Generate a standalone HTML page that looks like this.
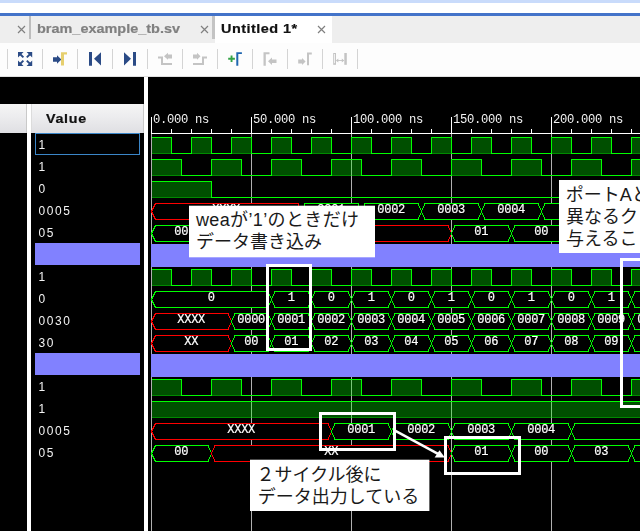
<!DOCTYPE html>
<html lang="ja"><head><meta charset="utf-8"><title>Untitled 1* - waveform</title>
<style>
html,body{margin:0;padding:0;}
body{width:640px;height:531px;background:#000;overflow:hidden;position:relative;font-family:"Liberation Sans",sans-serif;}
.abs{position:absolute;}
#top0{left:0;top:0;width:640px;height:3px;background:#c9dbfb;}
#top1{left:0;top:3px;width:640px;height:10px;background:#ffffff;}
#top2{left:0;top:13px;width:640px;height:3px;background:#4373c9;}
#tabs{left:0;top:16px;width:640px;height:27px;background:#eeeeee;}
#tabact{left:215px;top:0;width:117px;height:27px;background:#ffffff;}
.tabsep{top:0;width:2px;height:23px;background:#bdbdbd;}
.tab{top:5px;font-size:13px;font-weight:bold;letter-spacing:0;white-space:nowrap;line-height:16px;transform:scaleX(1.112);transform-origin:0 0;-webkit-text-stroke:0.2px currentColor;}
.x{top:9px;width:9px;height:9px;}
#tool{left:0;top:43px;width:640px;height:33px;background:#fdfdfd;border-bottom:1px solid #e0e0e0;}
#main{left:0;top:77px;width:640px;height:454px;background:#000;}
.hdr{top:104px;height:29px;background:linear-gradient(#f5f5f5,#ececee 45%,#dfdfe3);box-sizing:border-box;}
.wbar{background:#ffffff;}
.val{position:absolute;left:38.5px;width:100px;height:22px;line-height:24px;color:#f4f4f4;font-size:13px;letter-spacing:0.7px;}
.band{position:absolute;left:35px;width:105px;height:22px;background:#8181ff;}
#sel{left:35px;top:133px;width:103px;height:20px;border:1px solid #3b86c8;}
.hid{position:absolute;color:transparent;font-size:18px;line-height:22px;white-space:nowrap;overflow:hidden;}
svg{position:absolute;left:0;top:0;}
.tab,.val,.hv,.gt{filter:grayscale(1);}
</style></head>
<body>
<div id="top0" class="abs"></div><div id="top1" class="abs"></div><div id="top2" class="abs"></div>
<div id="tabs" class="abs">
  <svg class="x abs" style="left:17px" viewBox="0 0 9 9" width="9" height="9"><path d="M1,1 L8,8 M8,1 L1,8" stroke="#808080" stroke-width="1.2" fill="none"/></svg>
  <div class="tabsep abs" style="left:29px"></div>
  <svg class="x abs" style="left:200px" viewBox="0 0 9 9" width="9" height="9"><path d="M1,1 L8,8 M8,1 L1,8" stroke="#808080" stroke-width="1.2" fill="none"/></svg>
  <div class="tabsep abs" style="left:212px;width:3px;background:#c4c4c4"></div>
  <div id="tabact" class="abs"></div>
  <svg class="x abs" style="left:317px" viewBox="0 0 9 9" width="9" height="9"><path d="M1,1 L8,8 M8,1 L1,8" stroke="#808080" stroke-width="1.2" fill="none"/></svg>
</div>
<div id="tool" class="abs"></div>
<div id="main" class="abs"></div>
<div class="hdr abs" style="left:0;width:27px;border-right:1px solid #c9c9c9"></div>
<div class="hdr abs" style="left:31px;width:113px;border-left:1px solid #dcdcdc;border-right:1px solid #c9c9c9"></div>
<div class="wbar abs" style="left:27px;top:104px;width:4px;height:427px"></div>
<div class="wbar abs" style="left:144px;top:77px;width:4px;height:454px"></div>
<div class="band" style="top:243px"></div>
<div class="band" style="top:353px"></div>
<div id="sel" class="abs"></div>
<svg width="640" height="531" viewBox="0 0 640 531">
<rect x="7" y="49" width="1" height="20" fill="#d4d4d4"/>
<rect x="42" y="49" width="1" height="20" fill="#d4d4d4"/>
<rect x="77" y="49" width="1" height="20" fill="#d4d4d4"/>
<rect x="112" y="49" width="1" height="20" fill="#d4d4d4"/>
<rect x="147" y="49" width="1" height="20" fill="#d4d4d4"/>
<rect x="182" y="49" width="1" height="20" fill="#d4d4d4"/>
<rect x="217" y="49" width="1" height="20" fill="#d4d4d4"/>
<rect x="252" y="49" width="1" height="20" fill="#d4d4d4"/>
<rect x="287" y="49" width="1" height="20" fill="#d4d4d4"/>
<rect x="322" y="49" width="1" height="20" fill="#d4d4d4"/>
<rect x="357" y="49" width="1" height="20" fill="#d4d4d4"/>
<g fill="none" stroke="#2b4b86" stroke-width="1.9" stroke-linecap="butt">
<path d="M23.4,57.4 L19.5,53.5 M26.8,57.4 L30.7,53.5 M23.4,60.6 L19.5,64.5 M26.8,60.6 L30.7,64.5"/></g>
<g fill="#2b4b86">
<path d="M18,52 h5.6 l-5.6,5.6 z M32.2,52 v5.6 l-5.6,-5.6 z M18,66 v-5.6 l5.6,5.6 z M32.2,66 h-5.6 l5.6,-5.6 z"/></g>
<path d="M53,57.2 h4 v-2 l4.4,4.3 l-4.4,4.3 v-2 h-4 z" fill="#2b4b86"/>
<path d="M61,52.2 h6 v2.3 h-3 v11 h-3 z" fill="#e6cf6e"/>
<path d="M89,52 h3 v13.8 h-3 z M101,52.2 v13.3 l-7,-6.65 z" fill="#2b4b86"/>
<path d="M133,52 h3 v13.8 h-3 z M124,52.2 v13.3 l7,-6.65 z" fill="#2b4b86"/>
<path d="M158,56.5 h5 v6.5 h9 v2 h-11 v-6.5 h-3 z" fill="#c4c4c4"/>
<path d="M164,56.3 l4,-3.5 v1.7 h4 v4 h-4 v1.3 z" fill="#c4c4c4"/>
<path d="M207,56.5 h-5 v6.5 h-9 v2 h11 v-6.5 h3 z" fill="#c4c4c4"/>
<path d="M200.5,56.3 l-3.5,-3.5 v1.7 h-4 v4 h4 v1.3 z" fill="#c4c4c4"/>
<path d="M230.6,55.4 h1.9 v2.4 h2.4 v1.9 h-2.4 v2.4 h-1.9 v-2.4 h-2.4 v-1.9 h2.4 z" fill="#35a447"/>
<path d="M236.3,52.3 h5.6 v1.8 h-3.6 v11.6 h-2 z" fill="#1f66b0"/>
<path d="M263.5,52.2 h6 v2 h-3.7 v11.6 h-2.3 z" fill="#c4c4c4"/>
<path d="M268,61.2 l4,-3.7 v2 h4.5 v3.5 h-4.5 v2 z" fill="#c4c4c4"/>
<path d="M307,52.5 h4.8 v2 h-2.8 v10.7 h-2 z" fill="#c4c4c4"/>
<path d="M305.6,61.5 l-3.6,-3.5 v1.5 h-3.8 v4 h3.8 v1.5 z" fill="#c4c4c4"/>
<rect x="333.7" y="53.5" width="1.8" height="10.8" fill="none" stroke="#c4c4c4" stroke-width="1"/>
<rect x="344.3" y="53" width="2.5" height="11.8" fill="#c4c4c4"/>
<path d="M337,60.5 h6.5" stroke="#c4c4c4" stroke-width="0.9" fill="none"/>
<path d="M335.9,60.5 l2.4,-1.9 v3.8 z M344.2,60.5 l-2.4,-1.9 v3.8 z" fill="#c4c4c4"/>
<g class="gt" font-family="Liberation Sans, sans-serif" font-size="13" font-weight="bold" stroke-width="0.2">
<text transform="translate(37,33) scale(1.112,1)" textLength="128.63" lengthAdjust="spacing" fill="#808080" stroke="#808080">bram_example_tb.sv</text>
<text transform="translate(221,33) scale(1.112,1)" textLength="68.48" lengthAdjust="spacing" fill="#111111" stroke="#111111" xml:space="preserve">Untitled 1*</text>
<text transform="translate(46,123) scale(1.1,1)" textLength="36.46" lengthAdjust="spacing" fill="#111111" stroke="#111111">Value</text>
</g>
<g class="gt" font-family="Liberation Sans, sans-serif" font-size="13" fill="#f4f4f4"><text transform="translate(38.5,149) scale(0.92,1)" textLength="7.23" lengthAdjust="spacing">1</text>
<text transform="translate(38.5,171) scale(0.92,1)" textLength="7.23" lengthAdjust="spacing">1</text>
<text transform="translate(38.5,193) scale(0.92,1)" textLength="7.23" lengthAdjust="spacing">0</text>
<text transform="translate(38.5,215) scale(0.92,1)" textLength="34.23" lengthAdjust="spacing">0005</text>
<text transform="translate(38.5,237) scale(0.92,1)" textLength="16.23" lengthAdjust="spacing">05</text>
<text transform="translate(38.5,281) scale(0.92,1)" textLength="7.23" lengthAdjust="spacing">1</text>
<text transform="translate(38.5,303) scale(0.92,1)" textLength="7.23" lengthAdjust="spacing">0</text>
<text transform="translate(38.5,325) scale(0.92,1)" textLength="34.23" lengthAdjust="spacing">0030</text>
<text transform="translate(38.5,347) scale(0.92,1)" textLength="16.23" lengthAdjust="spacing">30</text>
<text transform="translate(38.5,391) scale(0.92,1)" textLength="7.23" lengthAdjust="spacing">1</text>
<text transform="translate(38.5,413) scale(0.92,1)" textLength="7.23" lengthAdjust="spacing">1</text>
<text transform="translate(38.5,435) scale(0.92,1)" textLength="34.23" lengthAdjust="spacing">0005</text>
<text transform="translate(38.5,457) scale(0.92,1)" textLength="16.23" lengthAdjust="spacing">05</text></g>
<g shape-rendering="crispEdges">
<rect x="151" y="134" width="1" height="398" fill="#b0b0b0"/>
<rect x="251" y="134" width="1" height="398" fill="#b0b0b0"/>
<rect x="351" y="134" width="1" height="398" fill="#b0b0b0"/>
<rect x="451" y="134" width="1" height="398" fill="#b0b0b0"/>
<rect x="551" y="134" width="1" height="398" fill="#b0b0b0"/>
<rect x="152" y="138" width="19" height="15" fill="#00ff00" fill-opacity="0.31"/>
<rect x="152" y="153" width="19" height="1" fill="#00ff00" fill-opacity="0.54"/>
<rect x="192" y="138" width="19" height="15" fill="#00ff00" fill-opacity="0.31"/>
<rect x="192" y="153" width="19" height="1" fill="#00ff00" fill-opacity="0.54"/>
<rect x="232" y="138" width="19" height="15" fill="#00ff00" fill-opacity="0.31"/>
<rect x="232" y="153" width="19" height="1" fill="#00ff00" fill-opacity="0.54"/>
<rect x="272" y="138" width="19" height="15" fill="#00ff00" fill-opacity="0.31"/>
<rect x="272" y="153" width="19" height="1" fill="#00ff00" fill-opacity="0.54"/>
<rect x="312" y="138" width="19" height="15" fill="#00ff00" fill-opacity="0.31"/>
<rect x="312" y="153" width="19" height="1" fill="#00ff00" fill-opacity="0.54"/>
<rect x="352" y="138" width="19" height="15" fill="#00ff00" fill-opacity="0.31"/>
<rect x="352" y="153" width="19" height="1" fill="#00ff00" fill-opacity="0.54"/>
<rect x="392" y="138" width="19" height="15" fill="#00ff00" fill-opacity="0.31"/>
<rect x="392" y="153" width="19" height="1" fill="#00ff00" fill-opacity="0.54"/>
<rect x="432" y="138" width="19" height="15" fill="#00ff00" fill-opacity="0.31"/>
<rect x="432" y="153" width="19" height="1" fill="#00ff00" fill-opacity="0.54"/>
<rect x="472" y="138" width="19" height="15" fill="#00ff00" fill-opacity="0.31"/>
<rect x="472" y="153" width="19" height="1" fill="#00ff00" fill-opacity="0.54"/>
<rect x="512" y="138" width="19" height="15" fill="#00ff00" fill-opacity="0.31"/>
<rect x="512" y="153" width="19" height="1" fill="#00ff00" fill-opacity="0.54"/>
<rect x="552" y="138" width="19" height="15" fill="#00ff00" fill-opacity="0.31"/>
<rect x="552" y="153" width="19" height="1" fill="#00ff00" fill-opacity="0.54"/>
<rect x="592" y="138" width="19" height="15" fill="#00ff00" fill-opacity="0.31"/>
<rect x="592" y="153" width="19" height="1" fill="#00ff00" fill-opacity="0.54"/>
<rect x="632" y="138" width="10" height="15" fill="#00ff00" fill-opacity="0.31"/>
<rect x="632" y="153" width="10" height="1" fill="#00ff00" fill-opacity="0.54"/>
<polyline points="151.5,137.5 171.5,137.5 171.5,153.5 191.5,153.5 191.5,137.5 211.5,137.5 211.5,153.5 231.5,153.5 231.5,137.5 251.5,137.5 251.5,153.5 271.5,153.5 271.5,137.5 291.5,137.5 291.5,153.5 311.5,153.5 311.5,137.5 331.5,137.5 331.5,153.5 351.5,153.5 351.5,137.5 371.5,137.5 371.5,153.5 391.5,153.5 391.5,137.5 411.5,137.5 411.5,153.5 431.5,153.5 431.5,137.5 451.5,137.5 451.5,153.5 471.5,153.5 471.5,137.5 491.5,137.5 491.5,153.5 511.5,153.5 511.5,137.5 531.5,137.5 531.5,153.5 551.5,153.5 551.5,137.5 571.5,137.5 571.5,153.5 591.5,153.5 591.5,137.5 611.5,137.5 611.5,153.5 631.5,153.5 631.5,137.5 642.5,137.5" fill="none" stroke="#00ff00" stroke-width="1"/>
<rect x="152" y="160" width="29" height="15" fill="#00ff00" fill-opacity="0.31"/>
<rect x="152" y="175" width="29" height="1" fill="#00ff00" fill-opacity="0.54"/>
<rect x="212" y="160" width="29" height="15" fill="#00ff00" fill-opacity="0.31"/>
<rect x="212" y="175" width="29" height="1" fill="#00ff00" fill-opacity="0.54"/>
<rect x="272" y="160" width="29" height="15" fill="#00ff00" fill-opacity="0.31"/>
<rect x="272" y="175" width="29" height="1" fill="#00ff00" fill-opacity="0.54"/>
<rect x="332" y="160" width="29" height="15" fill="#00ff00" fill-opacity="0.31"/>
<rect x="332" y="175" width="29" height="1" fill="#00ff00" fill-opacity="0.54"/>
<rect x="392" y="160" width="29" height="15" fill="#00ff00" fill-opacity="0.31"/>
<rect x="392" y="175" width="29" height="1" fill="#00ff00" fill-opacity="0.54"/>
<rect x="452" y="160" width="29" height="15" fill="#00ff00" fill-opacity="0.31"/>
<rect x="452" y="175" width="29" height="1" fill="#00ff00" fill-opacity="0.54"/>
<rect x="512" y="160" width="29" height="15" fill="#00ff00" fill-opacity="0.31"/>
<rect x="512" y="175" width="29" height="1" fill="#00ff00" fill-opacity="0.54"/>
<rect x="572" y="160" width="29" height="15" fill="#00ff00" fill-opacity="0.31"/>
<rect x="572" y="175" width="29" height="1" fill="#00ff00" fill-opacity="0.54"/>
<rect x="632" y="160" width="10" height="15" fill="#00ff00" fill-opacity="0.31"/>
<rect x="632" y="175" width="10" height="1" fill="#00ff00" fill-opacity="0.54"/>
<polyline points="151.5,159.5 181.5,159.5 181.5,175.5 211.5,175.5 211.5,159.5 241.5,159.5 241.5,175.5 271.5,175.5 271.5,159.5 301.5,159.5 301.5,175.5 331.5,175.5 331.5,159.5 361.5,159.5 361.5,175.5 391.5,175.5 391.5,159.5 421.5,159.5 421.5,175.5 451.5,175.5 451.5,159.5 481.5,159.5 481.5,175.5 511.5,175.5 511.5,159.5 541.5,159.5 541.5,175.5 571.5,175.5 571.5,159.5 601.5,159.5 601.5,175.5 631.5,175.5 631.5,159.5 642.5,159.5" fill="none" stroke="#00ff00" stroke-width="1"/>
<rect x="152" y="182" width="59" height="15" fill="#00ff00" fill-opacity="0.31"/>
<rect x="152" y="197" width="59" height="1" fill="#00ff00" fill-opacity="0.54"/>
<polyline points="151.5,181.5 211.5,181.5 211.5,197.5 642.5,197.5" fill="none" stroke="#00ff00" stroke-width="1"/>
<rect x="152" y="270" width="19" height="15" fill="#00ff00" fill-opacity="0.31"/>
<rect x="152" y="285" width="19" height="1" fill="#00ff00" fill-opacity="0.54"/>
<rect x="192" y="270" width="19" height="15" fill="#00ff00" fill-opacity="0.31"/>
<rect x="192" y="285" width="19" height="1" fill="#00ff00" fill-opacity="0.54"/>
<rect x="232" y="270" width="19" height="15" fill="#00ff00" fill-opacity="0.31"/>
<rect x="232" y="285" width="19" height="1" fill="#00ff00" fill-opacity="0.54"/>
<rect x="272" y="270" width="19" height="15" fill="#00ff00" fill-opacity="0.31"/>
<rect x="272" y="285" width="19" height="1" fill="#00ff00" fill-opacity="0.54"/>
<rect x="312" y="270" width="19" height="15" fill="#00ff00" fill-opacity="0.31"/>
<rect x="312" y="285" width="19" height="1" fill="#00ff00" fill-opacity="0.54"/>
<rect x="352" y="270" width="19" height="15" fill="#00ff00" fill-opacity="0.31"/>
<rect x="352" y="285" width="19" height="1" fill="#00ff00" fill-opacity="0.54"/>
<rect x="392" y="270" width="19" height="15" fill="#00ff00" fill-opacity="0.31"/>
<rect x="392" y="285" width="19" height="1" fill="#00ff00" fill-opacity="0.54"/>
<rect x="432" y="270" width="19" height="15" fill="#00ff00" fill-opacity="0.31"/>
<rect x="432" y="285" width="19" height="1" fill="#00ff00" fill-opacity="0.54"/>
<rect x="472" y="270" width="19" height="15" fill="#00ff00" fill-opacity="0.31"/>
<rect x="472" y="285" width="19" height="1" fill="#00ff00" fill-opacity="0.54"/>
<rect x="512" y="270" width="19" height="15" fill="#00ff00" fill-opacity="0.31"/>
<rect x="512" y="285" width="19" height="1" fill="#00ff00" fill-opacity="0.54"/>
<rect x="552" y="270" width="19" height="15" fill="#00ff00" fill-opacity="0.31"/>
<rect x="552" y="285" width="19" height="1" fill="#00ff00" fill-opacity="0.54"/>
<rect x="592" y="270" width="19" height="15" fill="#00ff00" fill-opacity="0.31"/>
<rect x="592" y="285" width="19" height="1" fill="#00ff00" fill-opacity="0.54"/>
<rect x="632" y="270" width="10" height="15" fill="#00ff00" fill-opacity="0.31"/>
<rect x="632" y="285" width="10" height="1" fill="#00ff00" fill-opacity="0.54"/>
<polyline points="151.5,269.5 171.5,269.5 171.5,285.5 191.5,285.5 191.5,269.5 211.5,269.5 211.5,285.5 231.5,285.5 231.5,269.5 251.5,269.5 251.5,285.5 271.5,285.5 271.5,269.5 291.5,269.5 291.5,285.5 311.5,285.5 311.5,269.5 331.5,269.5 331.5,285.5 351.5,285.5 351.5,269.5 371.5,269.5 371.5,285.5 391.5,285.5 391.5,269.5 411.5,269.5 411.5,285.5 431.5,285.5 431.5,269.5 451.5,269.5 451.5,285.5 471.5,285.5 471.5,269.5 491.5,269.5 491.5,285.5 511.5,285.5 511.5,269.5 531.5,269.5 531.5,285.5 551.5,285.5 551.5,269.5 571.5,269.5 571.5,285.5 591.5,285.5 591.5,269.5 611.5,269.5 611.5,285.5 631.5,285.5 631.5,269.5 642.5,269.5" fill="none" stroke="#00ff00" stroke-width="1"/>
<rect x="152" y="380" width="29" height="15" fill="#00ff00" fill-opacity="0.31"/>
<rect x="152" y="395" width="29" height="1" fill="#00ff00" fill-opacity="0.54"/>
<rect x="212" y="380" width="29" height="15" fill="#00ff00" fill-opacity="0.31"/>
<rect x="212" y="395" width="29" height="1" fill="#00ff00" fill-opacity="0.54"/>
<rect x="272" y="380" width="29" height="15" fill="#00ff00" fill-opacity="0.31"/>
<rect x="272" y="395" width="29" height="1" fill="#00ff00" fill-opacity="0.54"/>
<rect x="332" y="380" width="29" height="15" fill="#00ff00" fill-opacity="0.31"/>
<rect x="332" y="395" width="29" height="1" fill="#00ff00" fill-opacity="0.54"/>
<rect x="392" y="380" width="29" height="15" fill="#00ff00" fill-opacity="0.31"/>
<rect x="392" y="395" width="29" height="1" fill="#00ff00" fill-opacity="0.54"/>
<rect x="452" y="380" width="29" height="15" fill="#00ff00" fill-opacity="0.31"/>
<rect x="452" y="395" width="29" height="1" fill="#00ff00" fill-opacity="0.54"/>
<rect x="512" y="380" width="29" height="15" fill="#00ff00" fill-opacity="0.31"/>
<rect x="512" y="395" width="29" height="1" fill="#00ff00" fill-opacity="0.54"/>
<rect x="572" y="380" width="29" height="15" fill="#00ff00" fill-opacity="0.31"/>
<rect x="572" y="395" width="29" height="1" fill="#00ff00" fill-opacity="0.54"/>
<rect x="632" y="380" width="10" height="15" fill="#00ff00" fill-opacity="0.31"/>
<rect x="632" y="395" width="10" height="1" fill="#00ff00" fill-opacity="0.54"/>
<polyline points="151.5,379.5 181.5,379.5 181.5,395.5 211.5,395.5 211.5,379.5 241.5,379.5 241.5,395.5 271.5,395.5 271.5,379.5 301.5,379.5 301.5,395.5 331.5,395.5 331.5,379.5 361.5,379.5 361.5,395.5 391.5,395.5 391.5,379.5 421.5,379.5 421.5,395.5 451.5,395.5 451.5,379.5 481.5,379.5 481.5,395.5 511.5,395.5 511.5,379.5 541.5,379.5 541.5,395.5 571.5,395.5 571.5,379.5 601.5,379.5 601.5,395.5 631.5,395.5 631.5,379.5 642.5,379.5" fill="none" stroke="#00ff00" stroke-width="1"/>
<rect x="152" y="402" width="490" height="15" fill="#00ff00" fill-opacity="0.31"/>
<rect x="152" y="417" width="490" height="1" fill="#00ff00" fill-opacity="0.54"/>
<polyline points="151.5,401.5 642.5,401.5" fill="none" stroke="#00ff00" stroke-width="1"/>
<path d="M151.5,211.5 L155.5,203.5 L298.0,203.5 L301.5,211.5 L298.0,219.5 L155.5,219.5 Z" fill="#000000" stroke="#ff0000" stroke-width="1"/>
<path d="M301.5,211.5 L305.0,203.5 L358.0,203.5 L361.5,211.5 L358.0,219.5 L305.0,219.5 Z" fill="#000000" stroke="#00ff00" stroke-width="1"/>
<path d="M361.5,211.5 L365.0,203.5 L418.0,203.5 L421.5,211.5 L418.0,219.5 L365.0,219.5 Z" fill="#000000" stroke="#00ff00" stroke-width="1"/>
<path d="M421.5,211.5 L425.0,203.5 L478.0,203.5 L481.5,211.5 L478.0,219.5 L425.0,219.5 Z" fill="#000000" stroke="#00ff00" stroke-width="1"/>
<path d="M481.5,211.5 L485.0,203.5 L538.0,203.5 L541.5,211.5 L538.0,219.5 L485.0,219.5 Z" fill="#000000" stroke="#00ff00" stroke-width="1"/>
<path d="M541.5,211.5 L545.0,203.5 L598.0,203.5 L601.5,211.5 L598.0,219.5 L545.0,219.5 Z" fill="#000000" stroke="#00ff00" stroke-width="1"/>
<path d="M601.5,211.5 L605.0,203.5 L680.5,203.5 L680.5,211.5 L680.5,219.5 L605.0,219.5 Z" fill="#000000" stroke="#00ff00" stroke-width="1"/>
<path d="M151.5,233.5 L155.5,225.5 L208.0,225.5 L211.5,233.5 L208.0,241.5 L155.5,241.5 Z" fill="#000000" stroke="#00ff00" stroke-width="1"/>
<path d="M211.5,233.5 L215.0,225.5 L448.0,225.5 L451.5,233.5 L448.0,241.5 L215.0,241.5 Z" fill="#000000" stroke="#ff0000" stroke-width="1"/>
<path d="M451.5,233.5 L455.0,225.5 L508.0,225.5 L511.5,233.5 L508.0,241.5 L455.0,241.5 Z" fill="#000000" stroke="#00ff00" stroke-width="1"/>
<path d="M511.5,233.5 L515.0,225.5 L568.0,225.5 L571.5,233.5 L568.0,241.5 L515.0,241.5 Z" fill="#000000" stroke="#00ff00" stroke-width="1"/>
<path d="M571.5,233.5 L575.0,225.5 L628.0,225.5 L631.5,233.5 L628.0,241.5 L575.0,241.5 Z" fill="#000000" stroke="#00ff00" stroke-width="1"/>
<path d="M631.5,233.5 L635.0,225.5 L680.5,225.5 L680.5,233.5 L680.5,241.5 L635.0,241.5 Z" fill="#000000" stroke="#00ff00" stroke-width="1"/>
<path d="M151.5,299.5 L155.5,291.5 L268.0,291.5 L271.5,299.5 L268.0,307.5 L155.5,307.5 Z" fill="#000000" stroke="#00ff00" stroke-width="1"/>
<path d="M271.5,299.5 L275.0,291.5 L308.0,291.5 L311.5,299.5 L308.0,307.5 L275.0,307.5 Z" fill="#000000" stroke="#00ff00" stroke-width="1"/>
<path d="M311.5,299.5 L315.0,291.5 L348.0,291.5 L351.5,299.5 L348.0,307.5 L315.0,307.5 Z" fill="#000000" stroke="#00ff00" stroke-width="1"/>
<path d="M351.5,299.5 L355.0,291.5 L388.0,291.5 L391.5,299.5 L388.0,307.5 L355.0,307.5 Z" fill="#000000" stroke="#00ff00" stroke-width="1"/>
<path d="M391.5,299.5 L395.0,291.5 L428.0,291.5 L431.5,299.5 L428.0,307.5 L395.0,307.5 Z" fill="#000000" stroke="#00ff00" stroke-width="1"/>
<path d="M431.5,299.5 L435.0,291.5 L468.0,291.5 L471.5,299.5 L468.0,307.5 L435.0,307.5 Z" fill="#000000" stroke="#00ff00" stroke-width="1"/>
<path d="M471.5,299.5 L475.0,291.5 L508.0,291.5 L511.5,299.5 L508.0,307.5 L475.0,307.5 Z" fill="#000000" stroke="#00ff00" stroke-width="1"/>
<path d="M511.5,299.5 L515.0,291.5 L548.0,291.5 L551.5,299.5 L548.0,307.5 L515.0,307.5 Z" fill="#000000" stroke="#00ff00" stroke-width="1"/>
<path d="M551.5,299.5 L555.0,291.5 L588.0,291.5 L591.5,299.5 L588.0,307.5 L555.0,307.5 Z" fill="#000000" stroke="#00ff00" stroke-width="1"/>
<path d="M591.5,299.5 L595.0,291.5 L628.0,291.5 L631.5,299.5 L628.0,307.5 L595.0,307.5 Z" fill="#000000" stroke="#00ff00" stroke-width="1"/>
<path d="M631.5,299.5 L635.0,291.5 L668.0,291.5 L671.5,299.5 L668.0,307.5 L635.0,307.5 Z" fill="#000000" stroke="#00ff00" stroke-width="1"/>
<path d="M671.5,299.5 L675.0,291.5 L680.5,291.5 L680.5,299.5 L680.5,307.5 L675.0,307.5 Z" fill="#000000" stroke="#00ff00" stroke-width="1"/>
<path d="M151.5,321.5 L155.5,313.5 L228.0,313.5 L231.5,321.5 L228.0,329.5 L155.5,329.5 Z" fill="#000000" stroke="#ff0000" stroke-width="1"/>
<path d="M231.5,321.5 L235.0,313.5 L268.0,313.5 L271.5,321.5 L268.0,329.5 L235.0,329.5 Z" fill="#000000" stroke="#00ff00" stroke-width="1"/>
<path d="M271.5,321.5 L275.0,313.5 L308.0,313.5 L311.5,321.5 L308.0,329.5 L275.0,329.5 Z" fill="#000000" stroke="#00ff00" stroke-width="1"/>
<path d="M311.5,321.5 L315.0,313.5 L348.0,313.5 L351.5,321.5 L348.0,329.5 L315.0,329.5 Z" fill="#000000" stroke="#00ff00" stroke-width="1"/>
<path d="M351.5,321.5 L355.0,313.5 L388.0,313.5 L391.5,321.5 L388.0,329.5 L355.0,329.5 Z" fill="#000000" stroke="#00ff00" stroke-width="1"/>
<path d="M391.5,321.5 L395.0,313.5 L428.0,313.5 L431.5,321.5 L428.0,329.5 L395.0,329.5 Z" fill="#000000" stroke="#00ff00" stroke-width="1"/>
<path d="M431.5,321.5 L435.0,313.5 L468.0,313.5 L471.5,321.5 L468.0,329.5 L435.0,329.5 Z" fill="#000000" stroke="#00ff00" stroke-width="1"/>
<path d="M471.5,321.5 L475.0,313.5 L508.0,313.5 L511.5,321.5 L508.0,329.5 L475.0,329.5 Z" fill="#000000" stroke="#00ff00" stroke-width="1"/>
<path d="M511.5,321.5 L515.0,313.5 L548.0,313.5 L551.5,321.5 L548.0,329.5 L515.0,329.5 Z" fill="#000000" stroke="#00ff00" stroke-width="1"/>
<path d="M551.5,321.5 L555.0,313.5 L588.0,313.5 L591.5,321.5 L588.0,329.5 L555.0,329.5 Z" fill="#000000" stroke="#00ff00" stroke-width="1"/>
<path d="M591.5,321.5 L595.0,313.5 L628.0,313.5 L631.5,321.5 L628.0,329.5 L595.0,329.5 Z" fill="#000000" stroke="#00ff00" stroke-width="1"/>
<path d="M631.5,321.5 L635.0,313.5 L668.0,313.5 L671.5,321.5 L668.0,329.5 L635.0,329.5 Z" fill="#000000" stroke="#00ff00" stroke-width="1"/>
<path d="M671.5,321.5 L675.0,313.5 L680.5,313.5 L680.5,321.5 L680.5,329.5 L675.0,329.5 Z" fill="#000000" stroke="#00ff00" stroke-width="1"/>
<path d="M151.5,343.5 L155.5,335.5 L228.0,335.5 L231.5,343.5 L228.0,351.5 L155.5,351.5 Z" fill="#000000" stroke="#ff0000" stroke-width="1"/>
<path d="M231.5,343.5 L235.0,335.5 L268.0,335.5 L271.5,343.5 L268.0,351.5 L235.0,351.5 Z" fill="#000000" stroke="#00ff00" stroke-width="1"/>
<path d="M271.5,343.5 L275.0,335.5 L308.0,335.5 L311.5,343.5 L308.0,351.5 L275.0,351.5 Z" fill="#000000" stroke="#00ff00" stroke-width="1"/>
<path d="M311.5,343.5 L315.0,335.5 L348.0,335.5 L351.5,343.5 L348.0,351.5 L315.0,351.5 Z" fill="#000000" stroke="#00ff00" stroke-width="1"/>
<path d="M351.5,343.5 L355.0,335.5 L388.0,335.5 L391.5,343.5 L388.0,351.5 L355.0,351.5 Z" fill="#000000" stroke="#00ff00" stroke-width="1"/>
<path d="M391.5,343.5 L395.0,335.5 L428.0,335.5 L431.5,343.5 L428.0,351.5 L395.0,351.5 Z" fill="#000000" stroke="#00ff00" stroke-width="1"/>
<path d="M431.5,343.5 L435.0,335.5 L468.0,335.5 L471.5,343.5 L468.0,351.5 L435.0,351.5 Z" fill="#000000" stroke="#00ff00" stroke-width="1"/>
<path d="M471.5,343.5 L475.0,335.5 L508.0,335.5 L511.5,343.5 L508.0,351.5 L475.0,351.5 Z" fill="#000000" stroke="#00ff00" stroke-width="1"/>
<path d="M511.5,343.5 L515.0,335.5 L548.0,335.5 L551.5,343.5 L548.0,351.5 L515.0,351.5 Z" fill="#000000" stroke="#00ff00" stroke-width="1"/>
<path d="M551.5,343.5 L555.0,335.5 L588.0,335.5 L591.5,343.5 L588.0,351.5 L555.0,351.5 Z" fill="#000000" stroke="#00ff00" stroke-width="1"/>
<path d="M591.5,343.5 L595.0,335.5 L628.0,335.5 L631.5,343.5 L628.0,351.5 L595.0,351.5 Z" fill="#000000" stroke="#00ff00" stroke-width="1"/>
<path d="M631.5,343.5 L635.0,335.5 L668.0,335.5 L671.5,343.5 L668.0,351.5 L635.0,351.5 Z" fill="#000000" stroke="#00ff00" stroke-width="1"/>
<path d="M671.5,343.5 L675.0,335.5 L680.5,335.5 L680.5,343.5 L680.5,351.5 L675.0,351.5 Z" fill="#000000" stroke="#00ff00" stroke-width="1"/>
<path d="M151.5,431.5 L155.5,423.5 L328.0,423.5 L331.5,431.5 L328.0,439.5 L155.5,439.5 Z" fill="#000000" stroke="#ff0000" stroke-width="1"/>
<path d="M331.5,431.5 L335.0,423.5 L388.0,423.5 L391.5,431.5 L388.0,439.5 L335.0,439.5 Z" fill="#000000" stroke="#00ff00" stroke-width="1"/>
<path d="M391.5,431.5 L395.0,423.5 L448.0,423.5 L451.5,431.5 L448.0,439.5 L395.0,439.5 Z" fill="#000000" stroke="#00ff00" stroke-width="1"/>
<path d="M451.5,431.5 L455.0,423.5 L508.0,423.5 L511.5,431.5 L508.0,439.5 L455.0,439.5 Z" fill="#000000" stroke="#00ff00" stroke-width="1"/>
<path d="M511.5,431.5 L515.0,423.5 L568.0,423.5 L571.5,431.5 L568.0,439.5 L515.0,439.5 Z" fill="#000000" stroke="#00ff00" stroke-width="1"/>
<path d="M571.5,431.5 L575.0,423.5 L740.5,423.5 L740.5,431.5 L740.5,439.5 L575.0,439.5 Z" fill="#000000" stroke="#00ff00" stroke-width="1"/>
<path d="M151.5,453.5 L155.5,445.5 L208.0,445.5 L211.5,453.5 L208.0,461.5 L155.5,461.5 Z" fill="#000000" stroke="#00ff00" stroke-width="1"/>
<path d="M211.5,453.5 L215.0,445.5 L448.0,445.5 L451.5,453.5 L448.0,461.5 L215.0,461.5 Z" fill="#000000" stroke="#ff0000" stroke-width="1"/>
<path d="M451.5,453.5 L455.0,445.5 L508.0,445.5 L511.5,453.5 L508.0,461.5 L455.0,461.5 Z" fill="#000000" stroke="#00ff00" stroke-width="1"/>
<path d="M511.5,453.5 L515.0,445.5 L568.0,445.5 L571.5,453.5 L568.0,461.5 L515.0,461.5 Z" fill="#000000" stroke="#00ff00" stroke-width="1"/>
<path d="M571.5,453.5 L575.0,445.5 L628.0,445.5 L631.5,453.5 L628.0,461.5 L575.0,461.5 Z" fill="#000000" stroke="#00ff00" stroke-width="1"/>
<path d="M631.5,453.5 L635.0,445.5 L680.5,445.5 L680.5,453.5 L680.5,461.5 L635.0,461.5 Z" fill="#000000" stroke="#00ff00" stroke-width="1"/>
</g>
<g class="gt" font-family="Liberation Mono, monospace" font-size="12" fill="#ffffff" stroke="#ffffff" stroke-width="0.2" text-anchor="middle">
<text x="226.3" y="213" textLength="27.90" lengthAdjust="spacing">XXXX</text>
<text x="331.3" y="213" textLength="27.90" lengthAdjust="spacing">0001</text>
<text x="391.3" y="213" textLength="27.90" lengthAdjust="spacing">0002</text>
<text x="451.3" y="213" textLength="27.90" lengthAdjust="spacing">0003</text>
<text x="511.3" y="213" textLength="27.90" lengthAdjust="spacing">0004</text>
<text x="181.3" y="235" textLength="14.10" lengthAdjust="spacing">00</text>
<text x="331.3" y="235" textLength="14.10" lengthAdjust="spacing">XX</text>
<text x="481.3" y="235" textLength="14.10" lengthAdjust="spacing">01</text>
<text x="541.3" y="235" textLength="14.10" lengthAdjust="spacing">00</text>
<text x="601.3" y="235" textLength="14.10" lengthAdjust="spacing">03</text>
<text x="211.3" y="301" textLength="7.20" lengthAdjust="spacing">0</text>
<text x="291.3" y="301" textLength="7.20" lengthAdjust="spacing">1</text>
<text x="331.3" y="301" textLength="7.20" lengthAdjust="spacing">0</text>
<text x="371.3" y="301" textLength="7.20" lengthAdjust="spacing">1</text>
<text x="411.3" y="301" textLength="7.20" lengthAdjust="spacing">0</text>
<text x="451.3" y="301" textLength="7.20" lengthAdjust="spacing">1</text>
<text x="491.3" y="301" textLength="7.20" lengthAdjust="spacing">0</text>
<text x="531.3" y="301" textLength="7.20" lengthAdjust="spacing">1</text>
<text x="571.3" y="301" textLength="7.20" lengthAdjust="spacing">0</text>
<text x="611.3" y="301" textLength="7.20" lengthAdjust="spacing">1</text>
<text x="651.3" y="301" textLength="7.20" lengthAdjust="spacing">0</text>
<text x="191.3" y="323" textLength="27.90" lengthAdjust="spacing">XXXX</text>
<text x="251.3" y="323" textLength="27.90" lengthAdjust="spacing">0000</text>
<text x="291.3" y="323" textLength="27.90" lengthAdjust="spacing">0001</text>
<text x="331.3" y="323" textLength="27.90" lengthAdjust="spacing">0002</text>
<text x="371.3" y="323" textLength="27.90" lengthAdjust="spacing">0003</text>
<text x="411.3" y="323" textLength="27.90" lengthAdjust="spacing">0004</text>
<text x="451.3" y="323" textLength="27.90" lengthAdjust="spacing">0005</text>
<text x="491.3" y="323" textLength="27.90" lengthAdjust="spacing">0006</text>
<text x="531.3" y="323" textLength="27.90" lengthAdjust="spacing">0007</text>
<text x="571.3" y="323" textLength="27.90" lengthAdjust="spacing">0008</text>
<text x="611.3" y="323" textLength="27.90" lengthAdjust="spacing">0009</text>
<text x="651.3" y="323" textLength="27.90" lengthAdjust="spacing">000A</text>
<text x="191.3" y="345" textLength="14.10" lengthAdjust="spacing">XX</text>
<text x="251.3" y="345" textLength="14.10" lengthAdjust="spacing">00</text>
<text x="291.3" y="345" textLength="14.10" lengthAdjust="spacing">01</text>
<text x="331.3" y="345" textLength="14.10" lengthAdjust="spacing">02</text>
<text x="371.3" y="345" textLength="14.10" lengthAdjust="spacing">03</text>
<text x="411.3" y="345" textLength="14.10" lengthAdjust="spacing">04</text>
<text x="451.3" y="345" textLength="14.10" lengthAdjust="spacing">05</text>
<text x="491.3" y="345" textLength="14.10" lengthAdjust="spacing">06</text>
<text x="531.3" y="345" textLength="14.10" lengthAdjust="spacing">07</text>
<text x="571.3" y="345" textLength="14.10" lengthAdjust="spacing">08</text>
<text x="611.3" y="345" textLength="14.10" lengthAdjust="spacing">09</text>
<text x="651.3" y="345" textLength="14.10" lengthAdjust="spacing">0A</text>
<text x="241.3" y="433" textLength="27.90" lengthAdjust="spacing">XXXX</text>
<text x="361.3" y="433" textLength="27.90" lengthAdjust="spacing">0001</text>
<text x="421.3" y="433" textLength="27.90" lengthAdjust="spacing">0002</text>
<text x="481.3" y="433" textLength="27.90" lengthAdjust="spacing">0003</text>
<text x="541.3" y="433" textLength="27.90" lengthAdjust="spacing">0004</text>
<text x="181.3" y="455" textLength="14.10" lengthAdjust="spacing">00</text>
<text x="331.3" y="455" textLength="14.10" lengthAdjust="spacing">XX</text>
<text x="481.3" y="455" textLength="14.10" lengthAdjust="spacing">01</text>
<text x="541.3" y="455" textLength="14.10" lengthAdjust="spacing">00</text>
<text x="601.3" y="455" textLength="14.10" lengthAdjust="spacing">03</text>
</g>
<g shape-rendering="crispEdges">
<rect x="151" y="133" width="490" height="1" fill="#ffffff"/>
<rect x="151" y="117" width="1" height="17" fill="#ffffff"/>
<rect x="171" y="129" width="1" height="5" fill="#ffffff"/>
<rect x="191" y="129" width="1" height="5" fill="#ffffff"/>
<rect x="211" y="129" width="1" height="5" fill="#ffffff"/>
<rect x="231" y="129" width="1" height="5" fill="#ffffff"/>
<rect x="251" y="117" width="1" height="17" fill="#ffffff"/>
<rect x="271" y="129" width="1" height="5" fill="#ffffff"/>
<rect x="291" y="129" width="1" height="5" fill="#ffffff"/>
<rect x="311" y="129" width="1" height="5" fill="#ffffff"/>
<rect x="331" y="129" width="1" height="5" fill="#ffffff"/>
<rect x="351" y="117" width="1" height="17" fill="#ffffff"/>
<rect x="371" y="129" width="1" height="5" fill="#ffffff"/>
<rect x="391" y="129" width="1" height="5" fill="#ffffff"/>
<rect x="411" y="129" width="1" height="5" fill="#ffffff"/>
<rect x="431" y="129" width="1" height="5" fill="#ffffff"/>
<rect x="451" y="117" width="1" height="17" fill="#ffffff"/>
<rect x="471" y="129" width="1" height="5" fill="#ffffff"/>
<rect x="491" y="129" width="1" height="5" fill="#ffffff"/>
<rect x="511" y="129" width="1" height="5" fill="#ffffff"/>
<rect x="531" y="129" width="1" height="5" fill="#ffffff"/>
<rect x="551" y="117" width="1" height="17" fill="#ffffff"/>
<rect x="571" y="129" width="1" height="5" fill="#ffffff"/>
<rect x="591" y="129" width="1" height="5" fill="#ffffff"/>
<rect x="611" y="129" width="1" height="5" fill="#ffffff"/>
<rect x="631" y="129" width="1" height="5" fill="#ffffff"/>
<rect x="151" y="244" width="489" height="23" fill="#8181ff"/>
<rect x="151" y="354" width="489" height="23" fill="#8181ff"/>
</g>
<g class="gt" font-family="Liberation Mono, monospace" font-size="12.2" fill="#f2f2f2">
<text x="152.9" y="123" textLength="56.46" lengthAdjust="spacing" xml:space="preserve">0.000 ns</text>
<text x="252.9" y="123" textLength="63.48" lengthAdjust="spacing" xml:space="preserve">50.000 ns</text>
<text x="352.9" y="123" textLength="70.50" lengthAdjust="spacing" xml:space="preserve">100.000 ns</text>
<text x="452.9" y="123" textLength="70.50" lengthAdjust="spacing" xml:space="preserve">150.000 ns</text>
<text x="552.9" y="123" textLength="70.50" lengthAdjust="spacing" xml:space="preserve">200.000 ns</text>
</g>
<rect x="267.5" y="265.5" width="43" height="84" fill="none" stroke="#ffffff" stroke-width="3" shape-rendering="crispEdges"/>
<rect x="621.5" y="259.5" width="77" height="147" fill="none" stroke="#ffffff" stroke-width="3" shape-rendering="crispEdges"/>
<rect x="320.5" y="413.5" width="74" height="36" fill="none" stroke="#ffffff" stroke-width="3" shape-rendering="crispEdges"/>
<rect x="445.5" y="437.5" width="74" height="36" fill="none" stroke="#ffffff" stroke-width="3" shape-rendering="crispEdges"/>
<path d="M395,430.6 L438.5,454.2" stroke="#ffffff" stroke-width="2.5" fill="none"/>
<path d="M444.8,457.5 L434.6,457.5 L439.5,450.2 Z" fill="#ffffff"/>
<rect x="189" y="205.7" width="186" height="51.6" fill="#ffffff"/>
<g font-family="&quot;Liberation Sans&quot;, &quot;Noto Sans CJK JP&quot;, sans-serif" font-size="18" fill="#1a1a1a">
<text x="196" y="225.8" textLength="163" lengthAdjust="spacing">weaが’1’のときだけ</text>
<text x="196" y="248.1">データ書き込み</text>
</g>
<rect x="559" y="180" width="90" height="73" fill="#ffffff"/>
<g font-family="&quot;Liberation Sans&quot;, &quot;Noto Sans CJK JP&quot;, sans-serif" font-size="18" fill="#1a1a1a">
<text x="565.8" y="200.5">ポートAと</text>
<text x="566" y="222.6">異なるク</text>
<text x="566" y="244.7">与えるこ</text>
</g>
<rect x="250" y="459.7" width="179.4" height="51.3" fill="#ffffff"/>
<g font-family="&quot;Liberation Sans&quot;, &quot;Noto Sans CJK JP&quot;, sans-serif" font-size="18" fill="#1a1a1a">
<text x="256.5" y="481.2">２サイクル後に</text>
<text x="257.7" y="503.3">データ出力している</text>
</g>
</svg>
<div class="hid" style="left:195px;top:209px;width:178px">weaが’1’のときだけ<br>データ書き込み</div>
<div class="hid" style="left:566px;top:183px;width:74px">ポートAと<br>異なるク<br>与えるこ</div>
<div class="hid" style="left:256px;top:463px;width:172px">２サイクル後に<br>データ出力している</div>
</body></html>
